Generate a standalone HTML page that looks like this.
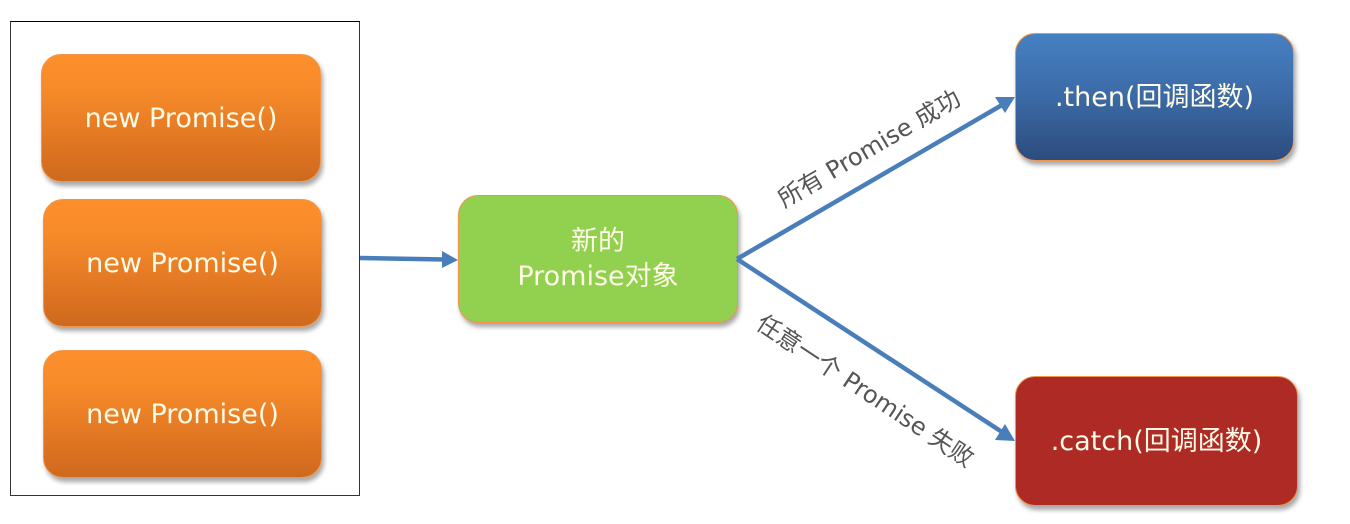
<!DOCTYPE html>
<html><head><meta charset="utf-8"><style>
*{margin:0;padding:0;box-sizing:border-box}
body{width:1350px;height:524px;background:#fff;position:relative;overflow:hidden;font-family:"DejaVu Sans","Liberation Sans","Noto Sans CJK SC",sans-serif}
.frame{position:absolute;left:10px;top:21px;width:350px;height:475px;border:1px solid #333;border-top-color:#000}
.box{position:absolute;border-radius:20px;border:1px solid #f0954a;color:#fffbe6;display:flex;align-items:center;justify-content:center;text-align:center;font-size:27px;line-height:35px;box-shadow:2px 4px 5px rgba(0,0,0,0.35)}
.or{background:linear-gradient(#fd8f2b 0%,#f88c2a 25%,#d86f20 85%,#cd6a1e 100%)}
.gr{background:#92d050;border-color:#f0954a}
.bl{background:linear-gradient(#4680c2,#3b6aa6 50%,#2c4c7e)}
.rd{background:#ad2a25}
.lbl{position:absolute;font-size:24px;color:#555;white-space:nowrap;transform-origin:0 0;font-family:"DejaVu Sans","Noto Sans CJK SC",sans-serif}
</style></head><body>
<div class="frame"></div>
<div class="box or" style="left:41px;top:54px;width:280px;height:128px">new Promise()</div>
<div class="box or" style="left:43px;top:199px;width:279px;height:128px">new Promise()</div>
<div class="box or" style="left:43px;top:350px;width:279px;height:128px">new Promise()</div>
<div class="box gr" style="left:458px;top:195px;width:280px;height:128px">新的<br>Promise对象</div>
<div class="box bl" style="left:1015px;top:33px;width:279px;height:128px">.then(回调函数)</div>
<div class="box rd" style="left:1015px;top:376px;width:283px;height:130px">.catch(回调函数)</div>
<svg style="position:absolute;left:0;top:0" width="1350" height="524">
<g stroke="#4a7ebb" stroke-width="4.5" fill="none">
<line x1="360" y1="258" x2="445" y2="259.5"/>
<line x1="737" y1="259" x2="1002" y2="105"/>
<line x1="737" y1="259" x2="1002" y2="432"/>
</g>
<g fill="#4a7ebb">
<polygon points="458,260 442,251 442,268"/>
<polygon points="1015,97 995,97 1005,113"/>
<polygon points="1015,441 1005,424 995,440"/>
</g>
</svg>
<div class="lbl" style="left:770px;top:184px;transform:rotate(-30.5deg)">所有 Promise 成功</div>
<div class="lbl" style="left:770px;top:304px;transform:rotate(33.5deg)">任意一个 Promise 失败</div>
</body></html>
